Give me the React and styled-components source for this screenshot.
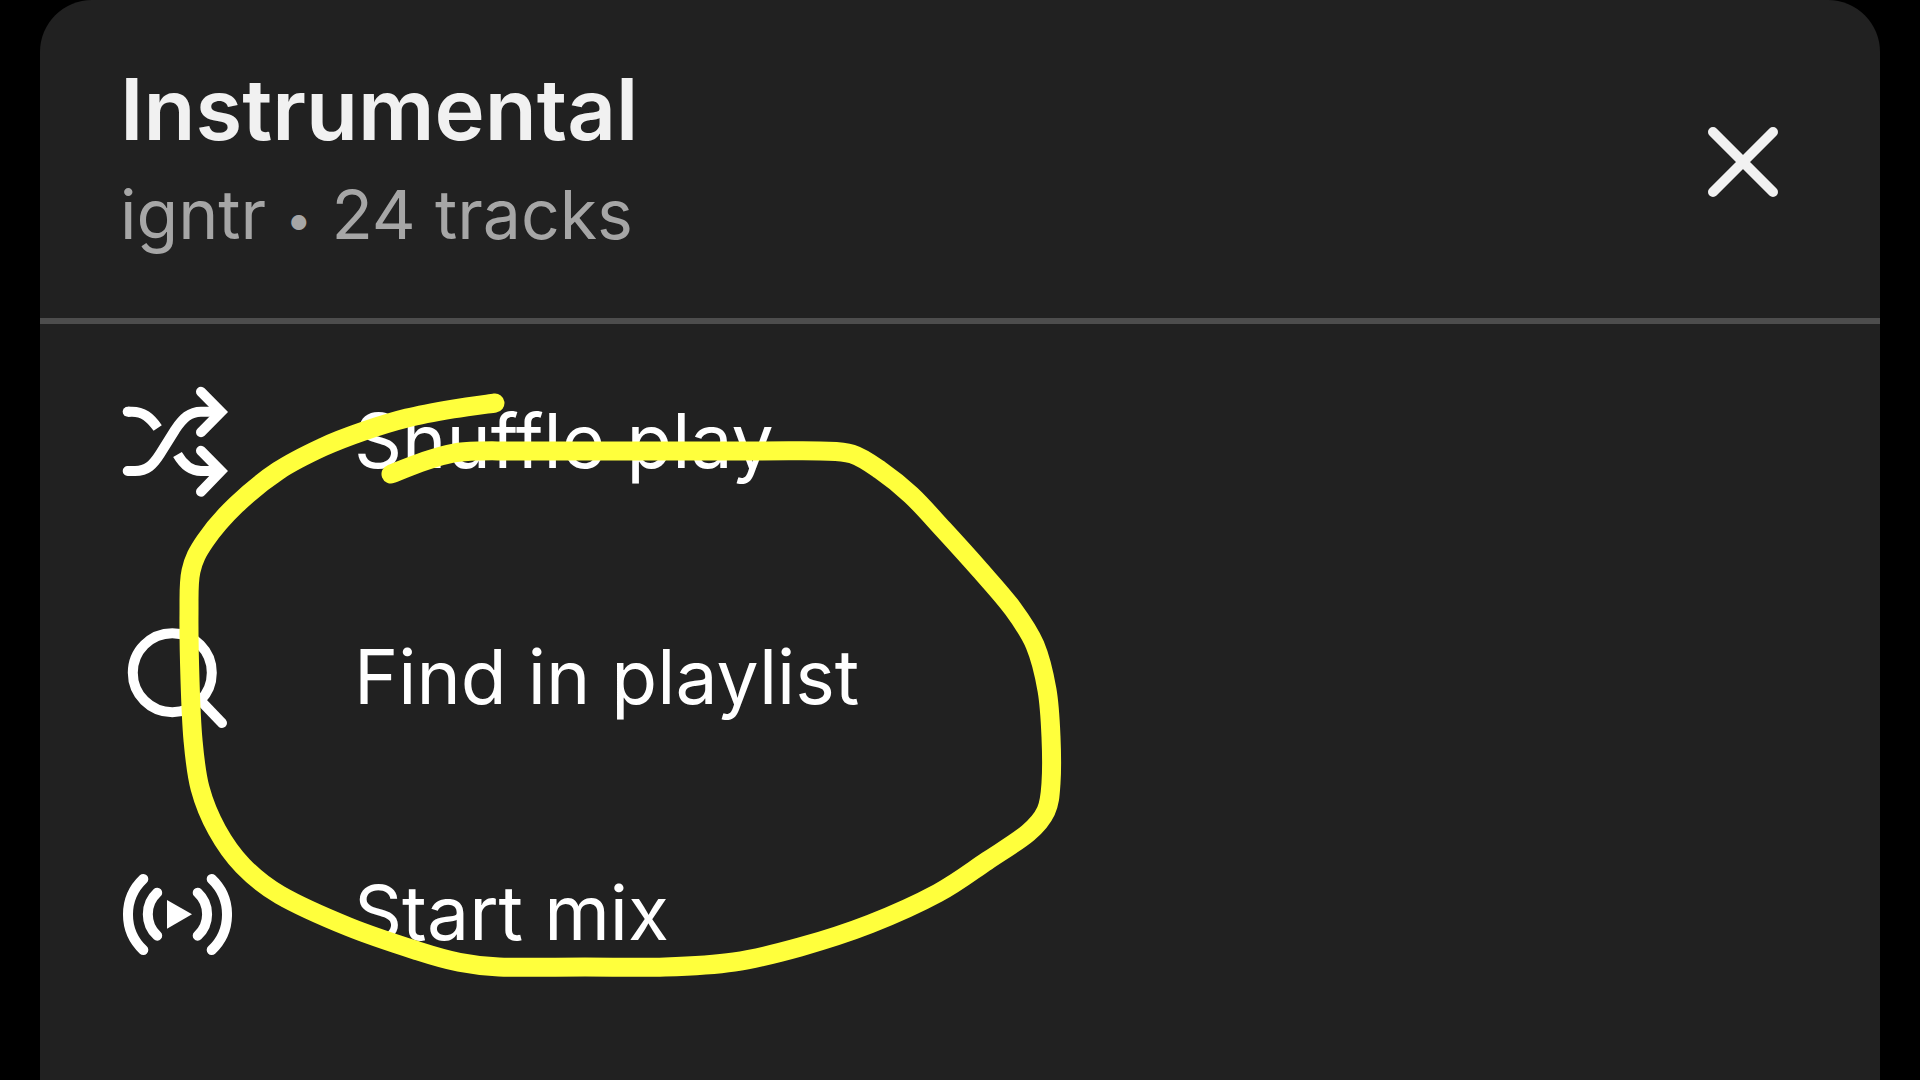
import React from 'react'
import styled, { createGlobalStyle } from 'styled-components'

const GlobalStyle = createGlobalStyle`
    body {
        margin: 0;
        background: #000;
        font-family: Inter, "Liberation Sans", sans-serif;
    }
`;

const Page = styled.div`
    padding: 0 40px;
`;

const Sheet = styled.main`
    position: relative;
    min-height: 100vh;
    border-radius: 52px 52px 0 0;
    background: #212121;
    color: #fff;
`;

const Header = styled.header`
    display: flex;
    align-items: center;
    justify-content: space-between;
    padding: 60px 101px 54px 80px;
    border-bottom: 6px solid #4d4d4d;
`;

const Title = styled.h1`
    margin: 0 0 4px;
    font-size: 85px;
    font-weight: 600;
    line-height: 100px;
    color: #f1f1f1;
`;

const Subtitle = styled.p`
    margin: 0;
    font-size: 68px;
    line-height: 100px;
    color: #a6a6a6;
`;

const Dot = styled.span`
    font-size: 48px;
    line-height: 1;
    vertical-align: 3px;
`;

const CloseButton = styled.button`
    display: flex;
    padding: 0;
    border: 0;
    background: none;
    color: #f1f1f1;
    cursor: pointer;
`;

const Menu = styled.ul`
    margin: 0;
    padding: 0;
    list-style: none;
`;

const MenuButton = styled.button`
    display: flex;
    align-items: center;
    gap: 122px;
    width: 100%;
    height: 236px;
    padding: 0 80px;
    border: 0;
    background: none;
    color: inherit;
    font-family: inherit;
    font-size: 75px;
    text-align: left;
    cursor: pointer;
`;

const Label = styled.span`
    padding-bottom: 4px;
`;

const LineIcon = styled.svg`
    flex: none;
    fill: none;
    stroke: currentColor;
    stroke-width: 10;
    stroke-linecap: round;
`;

const Marker = styled.svg`
    position: absolute;
    top: 0;
    left: 0;
    overflow: visible;
    fill: none;
    stroke: #ffff3c;
    stroke-width: 19;
    stroke-linecap: round;
    stroke-linejoin: round;
    pointer-events: none;
`;

const CloseIcon = () => (
    <LineIcon width="72" height="72" viewBox="0 0 72 72" aria-hidden="true">
        <path d="M6 6L66 66M66 6L6 66" />
    </LineIcon>
)

const ShuffleIcon = () => (
    <LineIcon width="112" height="112" viewBox="-1 0 112 112" aria-hidden="true">
        <path d="M6.7 85H14C26 85 32 79 39 68L54 44C62 32 69 25.7 80 25.7H98" />
        <path d="M80 5.7L100 26L80 46.3M80 64.7L100 85L80 105.7" />
        <path d="M6.7 25.7H8" />
        <path strokeLinecap="butt" d="M7 25.7H11C22 25.7 29 31 36.7 42M56.5 68.5C62 78 69 85 80 85H98" />
    </LineIcon>
)

const SearchIcon = () => (
    <LineIcon width="112" height="112" viewBox="-1 0 112 112" aria-hidden="true">
        <circle cx="51.3" cy="50.7" r="39.5" />
        <path d="M78 77L101 101" />
    </LineIcon>
)

const MixIcon = () => (
    <LineIcon width="112" height="112" viewBox="-1 0 112 112" aria-hidden="true">
        <path d="M22.3 21A48.8 48.8 0 0 0 22.3 92M90.7 21A48.8 48.8 0 0 1 90.7 92" />
        <path d="M36.2 34.7A29.3 29.3 0 0 0 36.2 77.7M76.7 34.7A29.3 29.3 0 0 1 76.7 77.7" />
        <path fill="currentColor" stroke="none" d="M46 42L71 56.3L46 70.7Z" />
    </LineIcon>
)

const items = [
    { label: 'Shuffle play', Icon: ShuffleIcon },
    { label: 'Find in playlist', Icon: SearchIcon },
    { label: 'Start mix', Icon: MixIcon },
]

// pen positions of the hand drawn loop
const loop = [
    [495, 403], [453, 409], [407, 418], [364, 431], [323, 447], [278, 471],
    [236, 505], [205, 541], [191, 571], [189, 613], [190, 680], [193, 740],
    [200, 788], [217, 830], [243, 866], [280, 895], [349, 927], [418, 951],
    [458, 962], [499, 967], [585, 967], [665, 967], [734, 962], [800, 947],
    [870, 924], [938, 893], [987, 861], [1028, 833], [1046, 811],
    [1051, 783], [1051, 737], [1047, 690], [1035, 645], [1013, 609],
    [980, 570], [943, 529], [911, 495], [880, 470], [852, 454],
    [820, 451], [760, 451], [640, 451], [520, 451], [482, 451],
    [454, 453], [425, 461], [391, 474],
]

// smooth curve through every point
const smooth = (pts) => {
    let d = `M${pts[0]}`
    for (let i = 0; i < pts.length - 1; i++) {
        const a = pts[i - 1] || pts[i]
        const b = pts[i]
        const c = pts[i + 1]
        const e = pts[i + 2] || c
        d += `C${b[0] + (c[0] - a[0]) / 6} ${b[1] + (c[1] - a[1]) / 6} `
        d += `${c[0] - (e[0] - b[0]) / 6} ${c[1] - (e[1] - b[1]) / 6} ${c[0]} ${c[1]}`
    }
    return d
}

function App() {
    return (
        <Page>
            <GlobalStyle />
            <Sheet>
                <Header>
                    <div>
                        <Title>Instrumental</Title>
                        <Subtitle>igntr <Dot>•</Dot> 24 tracks</Subtitle>
                    </div>
                    <CloseButton aria-label="Close">
                        <CloseIcon />
                    </CloseButton>
                </Header>
                <Menu>
                    {items.map(({ label, Icon }) => (
                        <li key={label}>
                            <MenuButton>
                                <Icon />
                                <Label>{label}</Label>
                            </MenuButton>
                        </li>
                    ))}
                </Menu>
                <Marker width="1100" height="1000" viewBox="40 0 1100 1000" aria-hidden="true">
                    <path d={smooth(loop)} />
                </Marker>
            </Sheet>
        </Page>
    )
}

export default App
